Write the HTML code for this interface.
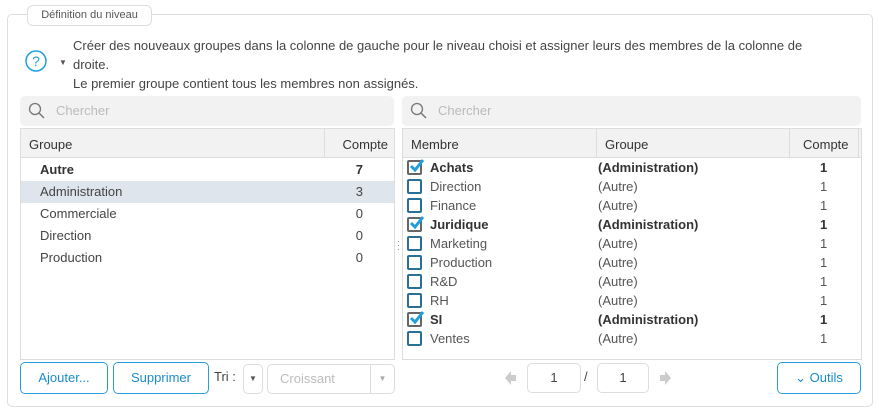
<!DOCTYPE html>
<html><head><meta charset="utf-8"><style>
*{box-sizing:border-box;margin:0;padding:0}
body{width:879px;height:412px;background:#fff;font-family:"Liberation Sans",sans-serif;font-size:13px;color:#444;position:relative;overflow:hidden}
.a{position:absolute}
.fs{left:7px;top:14px;width:866px;height:393px;border:1px solid #ddd;border-radius:5px}
.leg{left:27px;top:5px;width:125px;height:21px;border:1px solid #ddd;border-radius:6px;background:#fff;font-size:11px;color:#555;text-align:center;line-height:19px}
.search{background:#f2f2f2;border-radius:5px;height:30px;color:#bbb;line-height:30px;padding-left:36px}
.tbl{border:1px solid #ddd;background:#fff}
.hd{height:29px;background:#f2f2f2;border-bottom:1px solid #ddd;position:relative;line-height:31px;color:#333}
.row{position:absolute;height:22px;line-height:22px}
.btn{border:1px solid #29a0d8;border-radius:5px;color:#1a8ccc;text-align:center;line-height:30px;height:32px;background:#fff}
.inp{border:1px solid #ddd;border-radius:5px;background:#fff;height:30px;text-align:center;line-height:28px}
.cb{position:absolute;width:15px;height:15px;border:2px solid #2a6f96;border-radius:2px}
.r{position:absolute;height:19px;line-height:19px;color:#555}
.r b{color:#333}
</style></head><body>
<div class="a fs"></div>
<div class="a leg">Définition du niveau</div>
<svg class="a" style="left:25px;top:50px" width="22" height="22"><circle cx="11" cy="11" r="10" fill="none" stroke="#1ea0dc" stroke-width="1.5"/><text x="11" y="16" font-size="14" text-anchor="middle" fill="#1ea0dc" font-family="Liberation Sans">?</text></svg>
<div class="a" style="left:59px;top:58px;font-size:8px;color:#555">▼</div>
<div class="a" style="left:73px;top:36px;line-height:19px;width:762px;color:#444">Créer des nouveaux groupes dans la colonne de gauche pour le niveau choisi et assigner leurs des membres de la colonne de droite.<br>Le premier groupe contient tous les membres non assignés.</div>

<div class="a search" style="left:20px;top:96px;width:374px">Chercher</div>
<svg class="a" style="left:28px;top:102px" width="18" height="18"><circle cx="7" cy="7" r="5.5" fill="none" stroke="#777" stroke-width="1.3"/><line x1="11" y1="11" x2="16" y2="16" stroke="#777" stroke-width="1.5"/></svg>
<div class="a search" style="left:402px;top:96px;width:459px">Chercher</div>
<svg class="a" style="left:410px;top:102px" width="18" height="18"><circle cx="7" cy="7" r="5.5" fill="none" stroke="#777" stroke-width="1.3"/><line x1="11" y1="11" x2="16" y2="16" stroke="#777" stroke-width="1.5"/></svg>

<div class="a tbl" style="left:20px;top:128px;width:375px;height:232px">
<div class="hd"><span style="position:absolute;left:8px">Groupe</span><span style="position:absolute;left:303px;top:0;bottom:0;border-left:1px solid #ddd"></span><span style="position:absolute;right:6px">Compte</span></div>
<div class="row" style="top:30px;left:0;width:373px;font-weight:bold;color:#333"><span style="position:absolute;left:19px">Autre</span><span style="position:absolute;right:31px">7</span></div>
<div class="row" style="top:52px;left:0;width:373px;background:#dfe5ec"><span style="position:absolute;left:19px">Administration</span><span style="position:absolute;right:31px">3</span></div>
<div class="row" style="top:74px;left:0;width:373px"><span style="position:absolute;left:19px">Commerciale</span><span style="position:absolute;right:31px">0</span></div>
<div class="row" style="top:96px;left:0;width:373px"><span style="position:absolute;left:19px">Direction</span><span style="position:absolute;right:31px">0</span></div>
<div class="row" style="top:118px;left:0;width:373px"><span style="position:absolute;left:19px">Production</span><span style="position:absolute;right:31px">0</span></div>
</div>
<div class="a" style="left:397px;top:239px;font-size:9px;color:#888;line-height:4px">·<br>·<br>·</div>

<div class="a tbl" style="left:402px;top:128px;width:460px;height:232px">
<div class="hd"><span style="position:absolute;left:8px">Membre</span><span style="position:absolute;left:193px;top:0;bottom:0;border-left:1px solid #ddd"></span><span style="position:absolute;left:202px">Groupe</span><span style="position:absolute;left:386px;top:0;bottom:0;border-left:1px solid #ddd"></span><span style="position:absolute;left:400px">Compte</span><span style="position:absolute;left:455px;top:0;bottom:0;border-left:1px solid #ddd"></span></div>
</div>
<div class="a" style="left:402px;top:158px;width:460px">
<div class="r" style="top:0"><div class="cb" style="left:5px;top:2px;border-color:#666"></div><svg style="position:absolute;left:7px;top:0" width="16" height="14"><path d="M2 8 L6 12 L14 2" fill="none" stroke="#1ea0dc" stroke-width="3"/></svg><b style="position:absolute;left:28px">Achats</b><b style="position:absolute;left:196px;white-space:nowrap">(Administration)</b><b style="position:absolute;left:418px">1</b></div>
<div class="r" style="top:19px"><div class="cb" style="left:5px;top:2px"></div><span style="position:absolute;left:28px">Direction</span><span style="position:absolute;left:196px">(Autre)</span><span style="position:absolute;left:418px">1</span></div>
<div class="r" style="top:38px"><div class="cb" style="left:5px;top:2px"></div><span style="position:absolute;left:28px">Finance</span><span style="position:absolute;left:196px">(Autre)</span><span style="position:absolute;left:418px">1</span></div>
<div class="r" style="top:57px"><div class="cb" style="left:5px;top:2px;border-color:#666"></div><svg style="position:absolute;left:7px;top:0" width="16" height="14"><path d="M2 8 L6 12 L14 2" fill="none" stroke="#1ea0dc" stroke-width="3"/></svg><b style="position:absolute;left:28px">Juridique</b><b style="position:absolute;left:196px;white-space:nowrap">(Administration)</b><b style="position:absolute;left:418px">1</b></div>
<div class="r" style="top:76px"><div class="cb" style="left:5px;top:2px"></div><span style="position:absolute;left:28px">Marketing</span><span style="position:absolute;left:196px">(Autre)</span><span style="position:absolute;left:418px">1</span></div>
<div class="r" style="top:95px"><div class="cb" style="left:5px;top:2px"></div><span style="position:absolute;left:28px">Production</span><span style="position:absolute;left:196px">(Autre)</span><span style="position:absolute;left:418px">1</span></div>
<div class="r" style="top:114px"><div class="cb" style="left:5px;top:2px"></div><span style="position:absolute;left:28px">R&amp;D</span><span style="position:absolute;left:196px">(Autre)</span><span style="position:absolute;left:418px">1</span></div>
<div class="r" style="top:133px"><div class="cb" style="left:5px;top:2px"></div><span style="position:absolute;left:28px">RH</span><span style="position:absolute;left:196px">(Autre)</span><span style="position:absolute;left:418px">1</span></div>
<div class="r" style="top:152px"><div class="cb" style="left:5px;top:2px;border-color:#666"></div><svg style="position:absolute;left:7px;top:0" width="16" height="14"><path d="M2 8 L6 12 L14 2" fill="none" stroke="#1ea0dc" stroke-width="3"/></svg><b style="position:absolute;left:28px">SI</b><b style="position:absolute;left:196px;white-space:nowrap">(Administration)</b><b style="position:absolute;left:418px">1</b></div>
<div class="r" style="top:171px"><div class="cb" style="left:5px;top:2px"></div><span style="position:absolute;left:28px">Ventes</span><span style="position:absolute;left:196px">(Autre)</span><span style="position:absolute;left:418px">1</span></div>
</div>

<div class="a btn" style="left:20px;top:362px;width:88px">Ajouter...</div>
<div class="a btn" style="left:113px;top:362px;width:96px">Supprimer</div>
<div class="a" style="left:214px;top:369px">Tri :</div>
<div class="a inp" style="left:243px;top:364px;width:20px;font-size:8px;color:#555">▼</div>
<div class="a inp" style="left:267px;top:364px;width:128px;text-align:left;padding-left:12px;color:#bbb">Croissant<span style="position:absolute;right:0;top:0;width:24px;height:28px;border-left:1px solid #ddd;text-align:center;font-size:8px;color:#aaa">▼</span></div>
<svg class="a" style="left:504px;top:370px" width="14" height="16"><path d="M1 8 L7 1 V5 H12 V11 H7 V15 Z" fill="#ccc"/></svg>
<div class="a inp" style="left:527px;top:363px;width:54px">1</div>
<div class="a" style="left:584px;top:369px">/</div>
<div class="a inp" style="left:597px;top:363px;width:52px">1</div>
<svg class="a" style="left:658px;top:370px" width="14" height="16"><path d="M13 8 L7 1 V5 H2 V11 H7 V15 Z" fill="#ccc"/></svg>
<div class="a btn" style="left:777px;top:362px;width:84px">⌄ Outils</div>
</body></html>
